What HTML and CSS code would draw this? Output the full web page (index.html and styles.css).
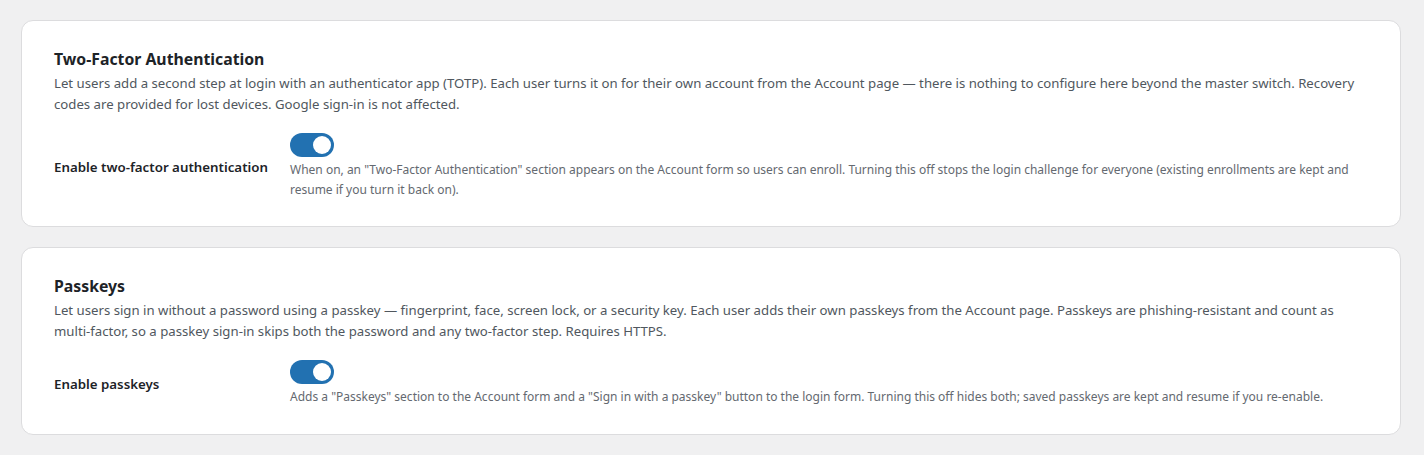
FILE: index.html
```html
<!DOCTYPE html>
<html>
	<head>
		<meta charset="UTF-8">
		<title>Security settings</title>
		<link rel="stylesheet" href="styles.css">
	</head>
	<body>
		<div class="card">
			<h2>Two-Factor Authentication</h2>
			<p class="desc">Let users add a second step at login with an authenticator app (TOTP). Each user turns it on for their own account from the Account page — there is nothing to configure here beyond the master switch. Recovery codes are provided for lost devices. Google sign-in is not affected.</p>
			<div class="row">
				<label class="label" for="tfa">Enable two-factor authentication</label>
				<div class="field">
					<label class="switch"><input id="tfa" type="checkbox" checked><span class="slider"></span></label>
					<p class="help">When on, an "Two-Factor Authentication" section appears on the Account form so users can enroll. Turning this off stops the login challenge for everyone (existing enrollments are kept and resume if you turn it back on).</p>
				</div>
			</div>
		</div>
		<div class="card">
			<h2>Passkeys</h2>
			<p class="desc">Let users sign in without a password using a passkey — fingerprint, face, screen lock, or a security key. Each user adds their own passkeys from the Account page. Passkeys are phishing-resistant and count as multi-factor, so a passkey sign-in skips both the password and any two-factor step. Requires HTTPS.</p>
			<div class="row">
				<label class="label" for="pk">Enable passkeys</label>
				<div class="field">
					<label class="switch"><input id="pk" type="checkbox" checked><span class="slider"></span></label>
					<p class="help">Adds a "Passkeys" section to the Account form and a "Sign in with a passkey" button to the login form. Turning this off hides both; saved passkeys are kept and resume if you re-enable.</p>
				</div>
			</div>
		</div>
	</body>
</html>
```
FILE: styles.css
```css
body {
	margin: 0;
	padding: 20px 23px 20px 21px;
	background-color: #f0f0f1;
	font-family: "Noto Sans", sans-serif;
	color: #1d2327;
}
.card {
	background-color: #fff;
	border: 1px solid #dcdcde;
	border-radius: 12px;
	padding: 27px 32px 26px 32px;
	margin-bottom: 20px;
}
.card + .card {
	padding-bottom: 27px;
}
h2 {
	margin: 0;
	font-size: 15.8px;
	line-height: 22px;
	font-weight: 700;
	color: #1d2327;
}
.desc {
	margin: 3px 0 0 0;
	font-size: 13.2px;
	line-height: 21px;
	color: #50575e;
}
.row {
	display: flex;
	align-items: center;
	margin-top: 18px;
}
.label {
	width: 236px;
	flex-shrink: 0;
	font-size: 13.3px;
	font-weight: 600;
	color: #1d2327;
}
.field {
	flex: 1;
}
.switch {
	display: block;
	position: relative;
	width: 44px;
	height: 24px;
}
.switch input {
	display: none;
}
.slider {
	display: block;
	width: 44px;
	height: 24px;
	border-radius: 12px;
	background-color: #2271b1;
}
.slider::after {
	content: "";
	position: absolute;
	top: 3px;
	right: 3px;
	width: 18px;
	height: 18px;
	border-radius: 50%;
	background-color: #fff;
}
.help {
	margin: 3px 0 0 0;
	font-size: 12px;
	line-height: 20px;
	color: #646970;
}
```
